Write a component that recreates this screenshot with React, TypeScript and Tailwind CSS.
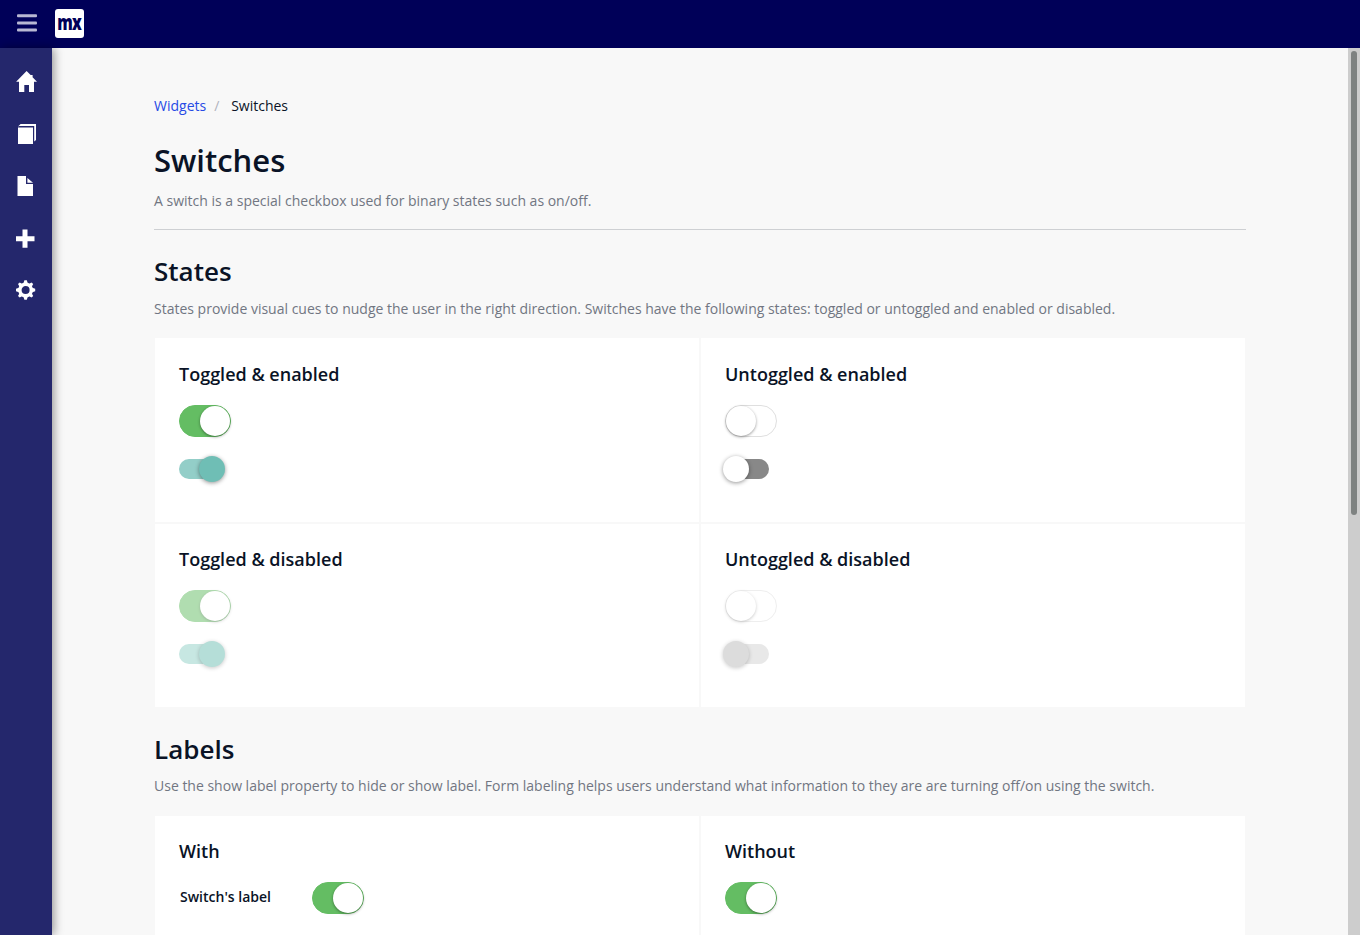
import type { ReactNode } from "react";

function Switch({ on = false, disabled = false }: { on?: boolean; disabled?: boolean }) {
  return (
    <div
      role="switch"
      aria-checked={on}
      aria-disabled={disabled}
      className={`flex h-8 w-[52px] rounded-full border ${
        on ? "justify-end border-[#64bd63] bg-[#64bd63]" : "justify-start border-[#dfdfdf] bg-white"
      } ${disabled ? "opacity-50" : ""}`}
    >
      <div className="h-[30px] w-[30px] rounded-full bg-white shadow-[0_1px_3px_rgba(0,0,0,0.4)]" />
    </div>
  );
}

function MaterialSwitch({ on = false, disabled = false }: { on?: boolean; disabled?: boolean }) {
  const track = on ? (disabled ? "bg-[#c7e7e2]" : "bg-[#93cec8]") : disabled ? "bg-[#e8e8e8]" : "bg-[#888888]";
  const knob = on ? (disabled ? "bg-[#b5ded8]" : "bg-[#6fbeb5]") : disabled ? "bg-[#dcdcdc]" : "bg-white";
  const shadow = disabled ? "shadow-[0_1px_4px_rgba(0,0,0,0.22)]" : "shadow-[0_1px_4px_rgba(0,0,0,0.42)]";
  return (
    <div
      role="switch"
      aria-checked={on}
      aria-disabled={disabled}
      className={`mt-[22px] flex h-5 w-11 items-center rounded-full ${on ? "justify-end" : "justify-start"} ${track}`}
    >
      <div className={`h-[26px] w-[26px] shrink-0 rounded-full ${on ? "-mr-0.5" : "-ml-0.5"} ${knob} ${shadow}`} />
    </div>
  );
}

function Card({ title, className, children }: { title: string; className: string; children: ReactNode }) {
  return (
    <div className={`bg-white px-6 ${className}`}>
      <h4 className="mb-[19px] text-[18px] leading-6 font-semibold">{title}</h4>
      {children}
    </div>
  );
}

function Sidebar() {
  return (
    <nav className="z-10 flex w-[52px] shrink-0 flex-col items-center bg-[#24276c] pt-2 text-white shadow-[2px_0_9px_rgba(0,0,0,0.4)]">
      <a className="flex h-[52px] items-center">
        <svg width="22" height="22" viewBox="0 0 22 22" className="block" fill="currentColor">
          <path d="M11.6 0 1.1 10.8H4V21H9.3V14H14V21H19V10.8H22L17.6 6.2V4H15.6V4.1Z" />
        </svg>
      </a>
      <a className="flex h-[52px] items-center">
        <svg width="22" height="22" viewBox="0 0 22 22" className="block" fill="currentColor">
          <path d="M3 4.4H18V21H3ZM3 3.4 5.6 1H21V17L19.2 18.6V3H4.6Z" />
        </svg>
      </a>
      <a className="flex h-[52px] items-center">
        <svg width="18" height="20" viewBox="0 0 18 20" className="block" fill="currentColor">
          <path d="M.5 0H9V8H16V20H.5ZM10.4 2 16 6.8H10.4Z" />
        </svg>
      </a>
      <a className="flex h-[52px] items-center">
        <svg width="20" height="20" viewBox="0 0 20 20" className="block" fill="currentColor">
          <path d="M6.5 1.4H11.5V8.2H18.5V13.2H11.5V19.8H6.5V13.2H0V8.2H6.5Z" />
        </svg>
      </a>
      <a className="flex h-[52px] items-center">
        <svg width="20" height="20" viewBox="0 0 20 20" className="block">
          <circle cx="9.6" cy="10" r="5.7" fill="none" stroke="currentColor" strokeWidth="3.4" />
          <path
            d="M8.4 .2H10.8L12 4H7.2ZM8.4 19.8H10.8L12 16H7.2ZM0 8.8V11.2L3.6 12.4V7.6ZM19.2 8.8V11.2L15.6 12.4V7.6ZM2 4.1 3.7 2.4 7 4.3 3.9 7.4ZM17.2 4.1 15.5 2.4 12.2 4.3 15.3 7.4ZM2 15.9 3.7 17.6 7 15.7 3.9 12.6ZM17.2 15.9 15.5 17.6 12.2 15.7 15.3 12.6Z"
            fill="currentColor"
          />
        </svg>
      </a>
    </nav>
  );
}

export default function App() {
  return (
    <div className="flex h-[935px] w-[1360px] flex-col overflow-hidden bg-[#f8f8f8] font-['Open_Sans',sans-serif] text-sm text-[#0a1326]">
      <header className="flex h-12 shrink-0 items-center bg-[#000058] pl-[17px]">
        <svg width="20" height="18" viewBox="0 0 20 18" className="-mt-[2px] block" fill="#b8b8d3">
          <rect y="0.3" width="20" height="3" rx="1" />
          <rect y="7.4" width="20" height="3" rx="1" />
          <rect y="14.5" width="20" height="3" rx="1" />
        </svg>
        <div className="-mt-px ml-[18px] flex h-[29px] w-[29px] items-center justify-center rounded-[3px] bg-white">
          <span className="-mt-[2px] scale-x-[0.74] text-[21px] leading-none font-extrabold tracking-[-1px] text-[#000058]">
            mx
          </span>
        </div>
      </header>
      <div className="flex min-h-0 flex-1">
        <Sidebar />
        <main className="h-full min-w-0 flex-1 overflow-hidden px-[102px] pt-12">
          <div className="flex leading-5">
            <a className="text-[#264ae5]">Widgets</a>
            <span className="ml-2 w-[17px] text-[#b0b3bd]">/</span>
            <span>Switches</span>
          </div>
          <h1 className="mt-6 text-[31px] leading-10 font-semibold">Switches</h1>
          <p className="mt-[11px] leading-5 text-[#717682]">
            A switch is a special checkbox used for binary states such as on/off.
          </p>
          <hr className="mt-[18px] border-t border-[#ced0d3]" />

          <h2 className="mt-[23px] text-[26px] leading-9 font-semibold">States</h2>
          <p className="mt-[10px] leading-5 text-[#717682]">
            States provide visual cues to nudge the user in the right direction. Switches have the following states:
            toggled or untoggled and enabled or disabled.
          </p>
          <div className="mx-px mt-[19px] grid grid-cols-2 gap-0.5">
            <Card title="Toggled & enabled" className="h-[184px] pt-6">
              <Switch on />
              <MaterialSwitch on />
            </Card>
            <Card title="Untoggled & enabled" className="h-[184px] pt-6">
              <Switch />
              <MaterialSwitch />
            </Card>
            <Card title="Toggled & disabled" className="h-[183px] pt-[23px]">
              <Switch on disabled />
              <MaterialSwitch on disabled />
            </Card>
            <Card title="Untoggled & disabled" className="h-[183px] pt-[23px]">
              <Switch disabled />
              <MaterialSwitch disabled />
            </Card>
          </div>

          <h2 className="mt-6 text-[26px] leading-9 font-semibold">Labels</h2>
          <p className="mt-[9px] leading-5 text-[#717682]">
            Use the show label property to hide or show label. Form labeling helps users understand what information to
            they are are turning off/on using the switch.
          </p>
          <div className="mx-px mt-5 grid grid-cols-2 gap-0.5">
            <Card title="With" className="h-[184px] pt-[23px]">
              <div className="flex pl-px">
                <label className="w-[132px] pt-[5px] leading-5 font-semibold">Switch's label</label>
                <Switch on />
              </div>
            </Card>
            <Card title="Without" className="h-[184px] pt-[23px]">
              <Switch on />
            </Card>
          </div>
        </main>
        <div className="flex w-3 shrink-0 justify-center bg-[#cdcdcd] pt-[3px]">
          <div className="h-[464px] w-1.5 rounded-full bg-[#7e8281]" />
        </div>
      </div>
    </div>
  );
}
